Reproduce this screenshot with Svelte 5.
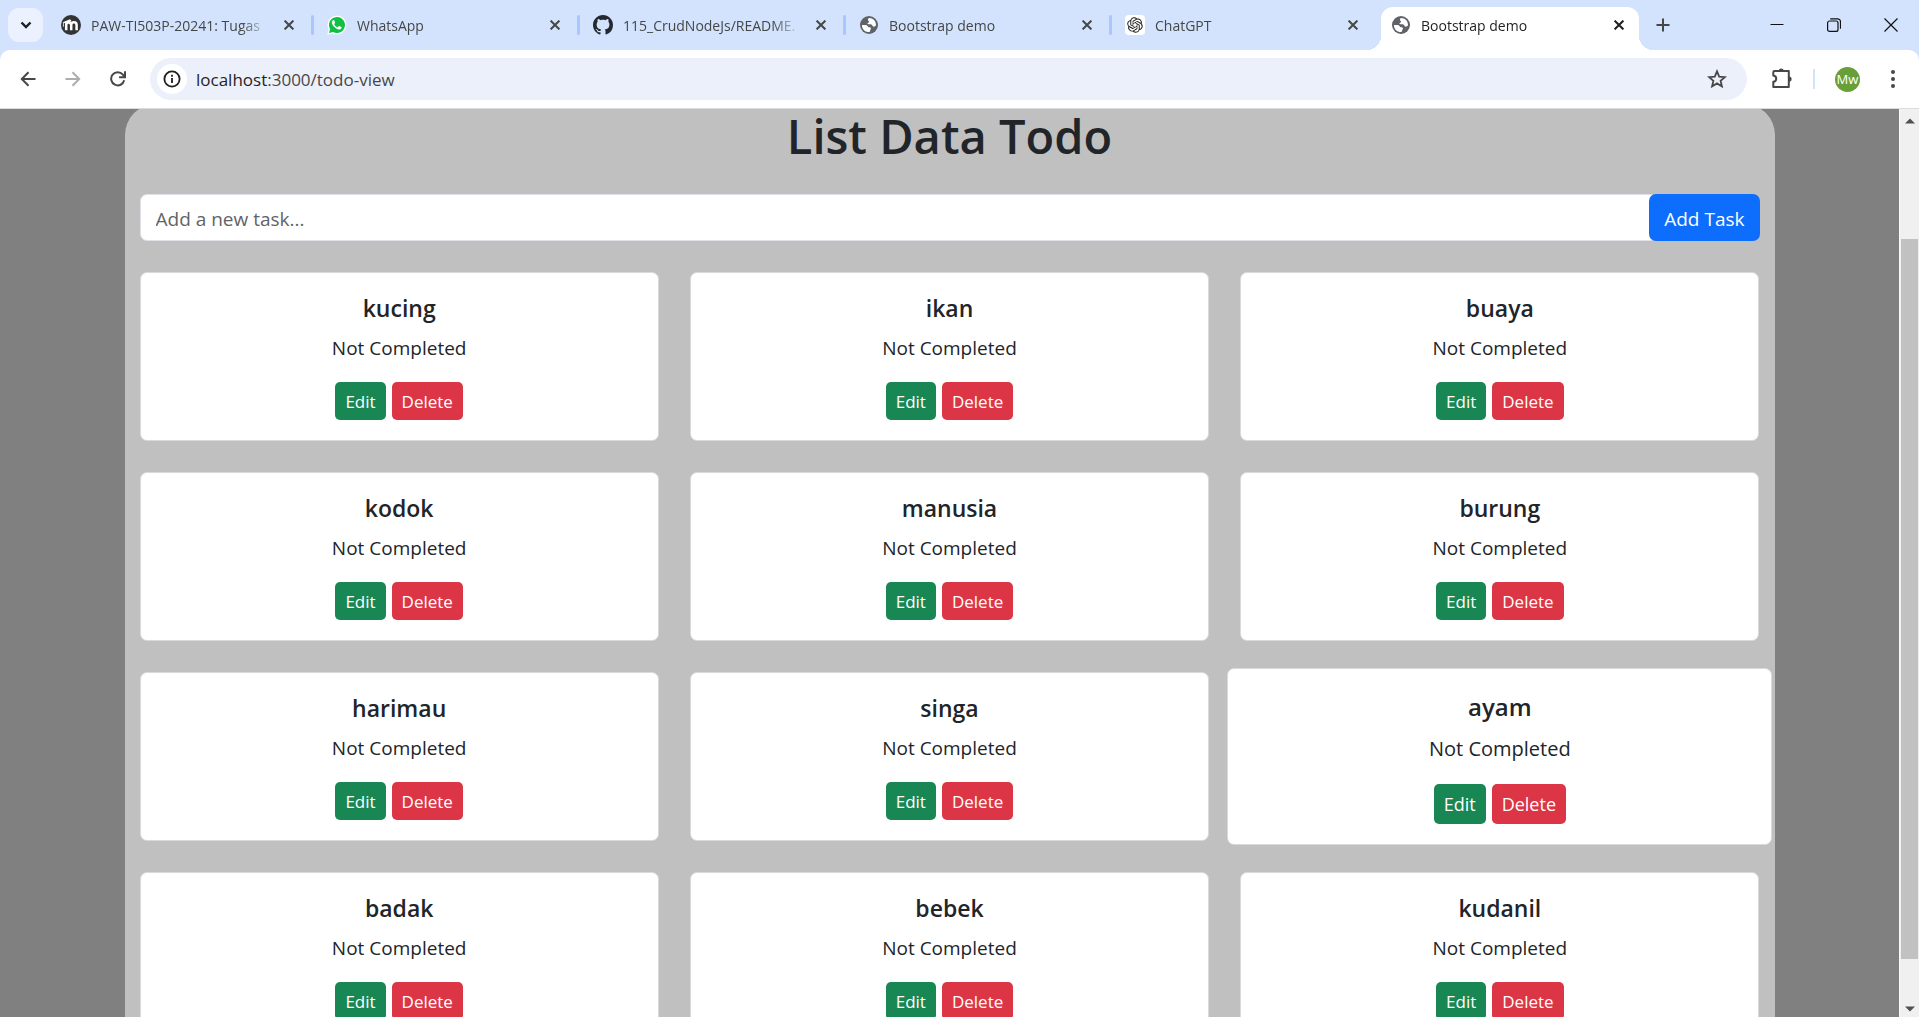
<script>
  const tabs = [
    { icon: 'moodle', title: 'PAW-TI503P-20241: Tugas' },
    { icon: 'whatsapp', title: 'WhatsApp' },
    { icon: 'github', title: '115_CrudNodeJs/README.' },
    { icon: 'globe', title: 'Bootstrap demo' },
    { icon: 'chatgpt', title: 'ChatGPT' },
    { icon: 'globe', title: 'Bootstrap demo', active: true }
  ];
  const todos = [
    'kucing', 'ikan', 'buaya', 'kodok', 'manusia', 'burung',
    'harimau', 'singa', 'ayam', 'badak', 'bebek', 'kudanil'
  ];
  const raised = 'ayam';
  let task = $state('');
</script>

{#snippet favicon(name)}
  {#if name === 'moodle'}
    <svg class="favicon" viewBox="0 0 20 20" aria-hidden="true">
      <circle cx="10" cy="10" r="10" fill="#333" />
      <path d="M5.200 15.200V10M5.200 10.200a2.500 2.500 0 0 1 5-.2v5.200M10.200 10a2.700 2.700 0 0 1 5.400 0v5.200" fill="none" stroke="#fff" stroke-width="2.500" />
      <path d="M1.800 7.200 9 4.200 10.600 6 7.800 7.400 4.400 8.600z" fill="#fff" />
      <path d="M2.400 7.200v4.600" stroke="#fff" stroke-width=".8" />
    </svg>
  {:else if name === 'whatsapp'}
    <svg class="favicon" viewBox="0 0 20 20" aria-hidden="true">
      <path d="M.2 19.8 1.7 14.6A9.4 9.4 0 1 1 5.6 18.4z" fill="#fff" />
      <path d="M2 18 3.1 14.1A8 8 0 1 1 6.1 17z" fill="#0fc143" />
      <path d="M7.3 5.5c-.2-.4-.3-.4-.6-.4-.3 0-.7.1-1 .5-.4.4-.9 1-.9 2 0 1.100.8 2.200 1.100 2.600 1.600 2.300 3.100 3.300 5 4 1.700.6 2.400.2 3-.2.600-.5.800-1.300.7-1.700 0-.3-.3-.4-.7-.6l-1.500-.700c-.3-.1-.5-.1-.7.2l-.700.900c-.2.200-.3.200-.6.100-1.300-.600-2.300-1.400-3.100-2.800-.1-.200 0-.400.2-.600l.5-.700c.1-.2.100-.4 0-.600z" fill="#fff" />
    </svg>
  {:else if name === 'github'}
    <svg class="favicon" viewBox="0 0 16 16" aria-hidden="true">
      <path fill="#24292f" d="M8 0C3.58 0 0 3.58 0 8c0 3.54 2.29 6.53 5.47 7.59.4.07.55-.17.55-.38 0-.19-.01-.82-.01-1.49-2.01.37-2.53-.49-2.69-.94-.09-.23-.48-.94-.82-1.13-.28-.15-.68-.52-.01-.53.63-.01 1.08.58 1.23.82.72 1.21 1.87.87 2.33.66.07-.52.28-.87.51-1.07-1.78-.2-3.64-.89-3.64-3.95 0-.87.31-1.59.82-2.15-.08-.2-.36-1.02.08-2.12 0 0 .67-.21 2.2.82.64-.18 1.32-.27 2-.27s1.36.09 2 .27c1.53-1.04 2.2-.82 2.2-.82.44 1.1.16 1.92.08 2.12.51.56.82 1.27.82 2.15 0 3.07-1.87 3.75-3.65 3.95.29.25.54.73.54 1.48 0 1.07-.01 1.93-.01 2.2 0 .21.15.46.55.38A8.01 8.01 0 0 0 16 8c0-4.42-3.58-8-8-8z" />
    </svg>
  {:else if name === 'globe'}
    <svg class="favicon" viewBox="0 0 20 20" aria-hidden="true">
      <circle cx="10" cy="10" r="9" fill="#5f6368" />
      <path fill="#fff" d="M10.200 3c-1.700.6-1.600 2.100-.6 3 .8.700.4 1.500-.5 1.800-1.300.4-.5 1.500.6 1.500h2.100c1.800 0 1.300 2.400 3 2.400.900 0 1.700-.7 2.300-1.700A7 7 0 0 0 10.200 3zM3 9.900C2.800 14 6 17.200 10.400 17c1-.6.6-2 1.200-2.700.7-.7.3-2-.9-2-1.500 0-1.700-.300-2.200-1.300-.6-1.200-1.700-1.100-2.700-1.100z" />
    </svg>
  {:else}
    <svg class="favicon" viewBox="0 0 32 32" aria-hidden="true">
      <rect width="32" height="32" rx="6" fill="#fff" />
      <path transform="translate(3.500 3.500) scale(1.040)" fill="#222" d="M22.2819 9.8211a5.9847 5.9847 0 0 0-.5157-4.9108 6.0462 6.0462 0 0 0-6.5098-2.9A6.0651 6.0651 0 0 0 4.9807 4.1818a5.9847 5.9847 0 0 0-3.9977 2.9 6.0462 6.0462 0 0 0 .7427 7.0966 5.98 5.98 0 0 0 .511 4.9107 6.051 6.051 0 0 0 6.5146 2.9001A5.9847 5.9847 0 0 0 13.2599 24a6.0557 6.0557 0 0 0 5.7718-4.2058 5.9894 5.9894 0 0 0 3.9977-2.9001 6.0557 6.0557 0 0 0-.7475-7.0729zm-9.022 12.6081a4.4755 4.4755 0 0 1-2.8764-1.0408l.1419-.0804 4.7783-2.7582a.7948.7948 0 0 0 .3927-.6813v-6.7369l2.02 1.1686a.071.071 0 0 1 .038.052v5.5826a4.504 4.504 0 0 1-4.4945 4.4944zm-9.6607-4.1254a4.4708 4.4708 0 0 1-.5346-3.0137l.142.0852 4.783 2.7582a.7712.7712 0 0 0 .7806 0l5.8428-3.3685v2.3324a.0804.0804 0 0 1-.0332.0615L9.74 19.9502a4.4992 4.4992 0 0 1-6.1408-1.6464zM2.3408 7.8956a4.485 4.485 0 0 1 2.3655-1.9728V11.6a.7664.7664 0 0 0 .3879.6765l5.8144 3.3543-2.0201 1.1685a.0757.0757 0 0 1-.071 0l-4.8303-2.7865A4.504 4.504 0 0 1 2.3408 7.872zm16.5963 3.8558L13.1038 8.364 15.1192 7.2a.0757.0757 0 0 1 .071 0l4.8303 2.7913a4.4944 4.4944 0 0 1-.6765 8.1042v-5.6772a.79.79 0 0 0-.407-.667zm2.0107-3.0231l-.142-.0852-4.7735-2.7818a.7759.7759 0 0 0-.7854 0L9.409 9.2297V6.8974a.0662.0662 0 0 1 .0284-.0615l4.8303-2.7866a4.4992 4.4992 0 0 1 6.6802 4.66zM8.3065 12.863l-2.02-1.1638a.0804.0804 0 0 1-.038-.0567V6.0742a4.4992 4.4992 0 0 1 7.3757-3.4537l-.142.0805L8.704 5.459a.7948.7948 0 0 0-.3927.6813zm1.0976-2.3654l2.602-1.4998 2.6069 1.4998v2.9994l-2.5974 1.4997-2.6067-1.4997Z" />
    </svg>
  {/if}
{/snippet}

<div class="window">
  <header class="tabstrip">
    <button class="tab-search" aria-label="Search tabs">
      <svg width="12" height="8" viewBox="0 0 12 8"><path d="M1.500 1.500 6 6l4.500-4.500" fill="none" stroke="#1f1f1f" stroke-width="2.400" /></svg>
    </button>
    <nav class="tabs" aria-label="Open tabs">
      {#each tabs as tab, i}
        <div class="tab" class:active={tab.active} class:divided={i < tabs.length - 2}>
          {@render favicon(tab.icon)}
          <span class="tab-title">{tab.title}</span>
          <button class="tab-close" aria-label="Close {tab.title}">
            <svg width="10" height="10" viewBox="0 0 10 10"><path d="M.6.600l8.800 8.800M9.400.600.600 9.400" stroke="currentColor" stroke-width="2" /></svg>
          </button>
        </div>
      {/each}
    </nav>
    <button class="new-tab" aria-label="New tab">
      <svg width="14" height="14" viewBox="0 0 14 14"><path d="M7 .500v13M.500 7h13" stroke="#444746" stroke-width="2" /></svg>
    </button>
    <div class="window-controls">
      <button aria-label="Minimize"><svg width="14" height="14" viewBox="0 0 14 14"><path d="M.500 6.500h13" stroke="#111" /></svg></button>
      <button aria-label="Restore"><svg width="14" height="14" viewBox="0 0 14 14" fill="none" stroke="#111" stroke-width="1.200"><rect x=".600" y="3" width="10.400" height="10.400" rx="2" /><path d="M3.200.800h7.300a3 3 0 0 1 3 3v7" /></svg></button>
      <button aria-label="Close window"><svg width="14" height="14" viewBox="0 0 14 14"><path d="M.500.500l13 13M13.500.500l-13 13" stroke="#111" stroke-width="1.200" /></svg></button>
    </div>
  </header>

  <div class="toolbar-backing">
    <div class="toolbar">
      <button class="tool" aria-label="Back">
        <svg width="16" height="16" viewBox="0 0 16 16"><path d="M15.500 8H2M8.500 1.300 1.800 8l6.700 6.700" fill="none" stroke="#474747" stroke-width="2" /></svg>
      </button>
      <button class="tool" aria-label="Forward" disabled>
        <svg width="16" height="16" viewBox="0 0 16 16"><path d="M.500 8H14M7.500 1.300 14.200 8l-6.700 6.700" fill="none" stroke="#adadad" stroke-width="2" /></svg>
      </button>
      <button class="tool" aria-label="Reload">
        <svg width="16" height="16" viewBox="0 0 16 16"><path d="M14.200 9.300A6.600 6.600 0 1 1 12.900 3.600L14.500 5.500M15 .300v5.900H9.100" fill="none" stroke="#474747" stroke-width="2" /></svg>
      </button>
      <div class="omnibox">
        <button class="site-info" aria-label="View site information">
          <svg width="18" height="18" viewBox="0 0 18 18"><circle cx="9" cy="9" r="7.600" fill="none" stroke="#1f1f1f" stroke-width="1.800" /><path d="M9 8v5M9 4.800v1.900" stroke="#1f1f1f" stroke-width="1.800" /></svg>
        </button>
        <span class="url"><b>localhost</b>:3000/todo-view</span>
        <button class="star" aria-label="Bookmark this tab">
          <svg width="20" height="20" viewBox="0 0 20 20"><path d="M10 2.300l2.200 5.300 5.700.500-4.300 3.700 1.300 5.600-4.900-3-4.900 3 1.300-5.600L2.100 8.100l5.700-.500z" fill="none" stroke="#474747" stroke-width="1.800" /></svg>
        </button>
      </div>
      <button class="tool extensions" aria-label="Extensions">
        <svg width="22" height="22" viewBox="0 0 22 22"><path d="M3.500 3h14.300v15.900H2.300v-5.100c3.900-.600 3.900-5.700 0-6.300V4.200A1.200 1.200 0 0 1 3.500 3z" fill="none" stroke="#474747" stroke-width="2" stroke-linejoin="round" /><path d="M7.700 3a2.500 2.500 0 0 1 5 0zM18 8.500a2.600 2.600 0 0 1 0 5.200z" fill="#474747" /></svg>
      </button>
      <span class="divider"></span>
      <button class="avatar" aria-label="Profile">Mw</button>
      <button class="tool menu" aria-label="Menu">
        <svg width="4" height="18" viewBox="0 0 4 18" fill="#474747"><circle cx="2" cy="2" r="2" /><circle cx="2" cy="9" r="2" /><circle cx="2" cy="16" r="2" /></svg>
      </button>
    </div>
  </div>

  <div class="viewport">
    <main class="page">
      <div class="container">
        <h1>List Data Todo</h1>
        <form class="add" onsubmit={(e) => e.preventDefault()}>
          <input type="text" placeholder="Add a new task..." aria-label="New task" bind:value={task} />
          <button type="submit">Add Task</button>
        </form>
        <section class="cards">
          {#each todos as todo}
            <article class="card" class:raised={todo === raised}>
              <h2>{todo}</h2>
              <p>Not Completed</p>
              <div class="actions">
                <button class="edit">Edit</button>
                <button class="delete">Delete</button>
              </div>
            </article>
          {/each}
        </section>
      </div>
    </main>
    <div class="scrollbar" aria-hidden="true">
      <svg width="10" height="20" viewBox="0 0 10 20"><path d="M0 14.500 5 9.500l5 5z" fill="#505050" /></svg>
      <span class="above"></span>
      <span class="thumb"></span>
      <span class="below"></span>
      <svg width="10" height="20" viewBox="0 0 10 20"><path d="M0 9.500h10l-5 5z" fill="#505050" /></svg>
    </div>
  </div>
</div>

<style>
  :global(body) {
    margin: 0;
    overflow: hidden;
  }
  .window {
    display: flex;
    flex-direction: column;
    height: 100vh;
    overflow: hidden;
    font-family: 'Open Sans', 'Noto Sans', sans-serif;
    color: #212529;
  }
  .window * {
    box-sizing: border-box;
  }
  button {
    display: flex;
    align-items: center;
    justify-content: center;
    flex: none;
    margin: 0;
    padding: 0;
    border: 0;
    background: none;
    font: inherit;
    color: inherit;
  }
  svg {
    display: block;
    flex: none;
  }

  .tabstrip {
    display: flex;
    flex: none;
    height: 50px;
    padding-left: 8px;
    background: #d3e3fd;
  }
  .tab-search {
    width: 35px;
    height: 34px;
    margin: 8px 8px 0 0;
    border-radius: 11px;
    background: #ebf1fe;
  }
  .tabs {
    display: flex;
    flex: 0 1 1588px;
    min-width: 0;
    gap: 8px;
  }
  .tab {
    position: relative;
    display: flex;
    flex: 1;
    align-items: center;
    min-width: 0;
    height: 43px;
    margin-top: 7px;
    padding: 0 10px 7px;
    color: #444746;
  }
  .tab.divided::after {
    content: '';
    position: absolute;
    top: 8px;
    right: -5px;
    width: 3px;
    height: 20px;
    border-radius: 2px;
    background: #a8c7fa;
  }
  .tab.active {
    border-radius: 12px 12px 0 0;
    background: #fff;
    color: #1f1f1f;
  }
  .tab.active::before,
  .tab.active::after {
    content: '';
    position: absolute;
    bottom: 0;
    width: 14px;
    height: 14px;
  }
  .tab.active::before {
    left: -14px;
    background: radial-gradient(circle at 0 0, transparent 14px, #fff 14px);
  }
  .tab.active::after {
    right: -14px;
    background: radial-gradient(circle at 100% 0, transparent 14px, #fff 14px);
  }
  .favicon {
    width: 20px;
    height: 20px;
  }
  .tab-title {
    flex: 1;
    min-width: 0;
    margin: 0 10px;
    padding-top: 2px;
    overflow: hidden;
    font-size: 14px;
    line-height: 20px;
    white-space: nowrap;
    mask-image: linear-gradient(to left, transparent, #000 28px);
  }
  .tab-close {
    width: 20px;
    height: 20px;
  }
  .new-tab {
    width: 34px;
    height: 50px;
    margin-left: 7px;
  }
  .window-controls {
    display: flex;
    margin-left: auto;
  }
  .window-controls button {
    width: 57px;
    height: 50px;
  }

  .toolbar-backing {
    flex: none;
    background: #d3e3fd;
  }
  .toolbar {
    display: flex;
    align-items: center;
    height: 59px;
    padding: 0 6px 0 5px;
    border-bottom: 1px solid #dcdcdc;
    border-radius: 10px 10px 0 0;
    background: #fff;
  }
  .tool {
    width: 45px;
    height: 42px;
  }
  .omnibox {
    display: flex;
    flex: 1;
    align-items: center;
    height: 42px;
    margin-left: 10px;
    padding: 0 20px 0 7px;
    border-radius: 21px;
    background: #ecf0fa;
  }
  .site-info {
    width: 30px;
    height: 30px;
    border-radius: 50%;
    background: #fff;
  }
  .url {
    flex: 1;
    margin-left: 9px;
    padding-top: 2px;
    font-size: 17px;
    line-height: 24px;
    color: #474747;
  }
  .url b {
    font-weight: 400;
    color: #1f1f1f;
  }
  .extensions {
    margin-left: 12px;
  }
  .divider {
    width: 2px;
    height: 20px;
    margin: 0 20px 0 9px;
    background: #d3e3fd;
  }
  .avatar {
    width: 25px;
    height: 25px;
    border-radius: 50%;
    background: #689f38;
    font-size: 13px;
    color: #fff;
  }
  .menu {
    width: 40px;
    margin-left: 13px;
  }

  .viewport {
    display: flex;
    flex: 1;
    min-height: 0;
  }
  .page {
    flex: 1;
    min-width: 0;
    overflow: hidden;
    background: #808080;
  }
  .container {
    max-width: 1650px;
    margin: -5px auto 0;
    padding: 0 15px 31px;
    border-radius: 31px;
    background: #c0c0c0;
  }
  h1 {
    margin: 0;
    padding-bottom: 26px;
    font-size: 47px;
    font-weight: 600;
    line-height: 64px;
    text-align: center;
  }
  .add {
    display: flex;
    margin-bottom: 31px;
  }
  .add input {
    flex: 1;
    min-width: 0;
    height: 47px;
    margin: 0 -8px 0 0;
    padding: 2px 15px 0;
    border: 1px solid #dee2e6;
    border-radius: 7px;
    background: #fff;
    font: inherit;
    font-size: 19px;
    color: #212529;
  }
  .add input::placeholder {
    color: #5f6468;
    opacity: 1;
  }
  .add button {
    position: relative;
    height: 47px;
    padding: 2px 15px 0;
    border-radius: 7px;
    background: #0d6efd;
    font-size: 19px;
    color: #fff;
  }
  .cards {
    display: grid;
    grid-template-columns: repeat(3, minmax(0, 1fr));
    gap: 31px;
  }
  .card {
    padding: 20px;
    border: 1px solid #d9d9d9;
    border-radius: 7px;
    background: #fff;
    text-align: center;
  }
  .card h2 {
    margin: 0 0 10px;
    font-size: 23px;
    font-weight: 600;
    line-height: 30px;
  }
  .card p {
    margin: 0 0 19px;
    font-size: 19px;
    line-height: 30px;
  }
  .actions {
    display: flex;
    justify-content: center;
    gap: 6px;
  }
  .actions button {
    height: 38px;
    padding: 0 10px;
    border-radius: 5px;
    font-size: 17px;
    color: #fff;
  }
  .actions .edit {
    background: #198754;
  }
  .actions .delete {
    background: #dc3545;
  }
  .card.raised {
    margin: -4px -13px;
    padding-top: 22px;
  }
  .raised h2 {
    font-size: 24px;
    line-height: 32px;
  }
  .raised p {
    font-size: 20px;
    line-height: 32px;
  }
  .raised .actions button {
    height: 40px;
    font-size: 18px;
  }

  .scrollbar {
    display: flex;
    flex: none;
    flex-direction: column;
    align-items: center;
    width: 20px;
    border-left: 1px solid #fafafa;
    background: #f0f0f0;
  }
  .above {
    flex: 110;
  }
  .thumb {
    flex: 720;
    width: 17px;
    background: #c1c1c1;
  }
  .below {
    flex: 38;
  }
</style>
